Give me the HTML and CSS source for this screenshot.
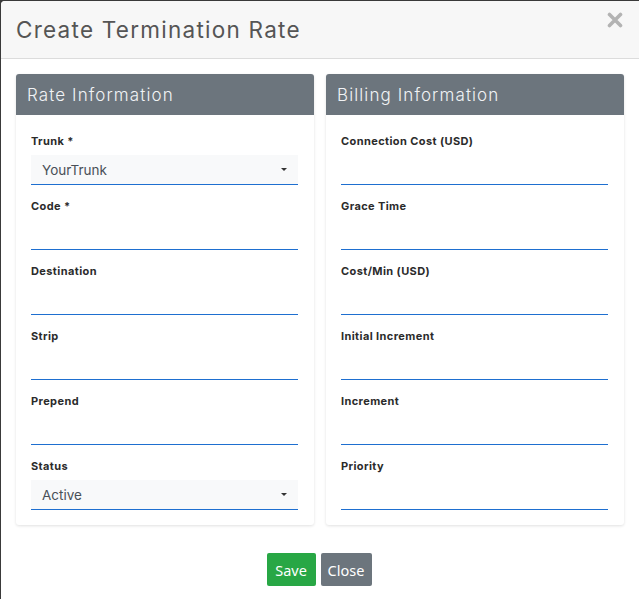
FILE: index.html
```html
<!DOCTYPE html>
<html>
<head>
<meta charset="utf-8">
<link rel="stylesheet" href="styles.css">
</head>
<body>
<div class="modal">
  <div class="modal-header">
    <h4 class="modal-title">Create Termination Rate</h4>
    <button class="close" type="button" aria-label="Close">
      <svg width="16" height="16" viewBox="0 0 16 16"><path d="M2.5 2.5 L13.5 13.5 M13.5 2.5 L2.5 13.5" stroke="#b3b3b3" stroke-width="3.6" stroke-linecap="round"/></svg>
    </button>
  </div>
  <div class="modal-body">
    <div class="panels">
      <div class="panel">
        <div class="panel-heading">Rate Information</div>
        <div class="panel-body">
          <div class="group"><label>Trunk *</label><div class="select"><span>YourTrunk</span><i class="caret"></i></div></div>
          <div class="group"><label>Code *</label><div class="input"></div></div>
          <div class="group"><label>Destination</label><div class="input"></div></div>
          <div class="group"><label>Strip</label><div class="input"></div></div>
          <div class="group"><label>Prepend</label><div class="input"></div></div>
          <div class="group"><label>Status</label><div class="select"><span>Active</span><i class="caret"></i></div></div>
        </div>
      </div>
      <div class="panel">
        <div class="panel-heading">Billing Information</div>
        <div class="panel-body">
          <div class="group"><label>Connection Cost (USD)</label><div class="input"></div></div>
          <div class="group"><label>Grace Time</label><div class="input"></div></div>
          <div class="group"><label>Cost/Min (USD)</label><div class="input"></div></div>
          <div class="group"><label>Initial Increment</label><div class="input"></div></div>
          <div class="group"><label>Increment</label><div class="input"></div></div>
          <div class="group"><label>Priority</label><div class="input"></div></div>
        </div>
      </div>
    </div>
    <div class="actions">
      <button class="btn btn-save" type="button">Save</button>
      <button class="btn btn-close" type="button">Close</button>
    </div>
  </div>
</div>
</body>
</html>
```

FILE: styles.css
```css
html, body {
  margin: 0;
  padding: 0;
}
body {
  background: #3a3a3a;
  font-family: Inter, "Noto Sans", sans-serif;
  height: 599px;
  overflow: hidden;
}
.modal {
  margin: 1px 0 0 1px;
  width: 638px;
  height: 620px;
  background: #fff;
  border-radius: 4px 0 0 0;
}
.modal-header {
  height: 57px;
  background: #f7f7f7;
  border-bottom: 1px solid #dcdcdc;
  border-radius: 4px 0 0 0;
  display: flex;
  align-items: center;
  justify-content: space-between;
  padding: 0 16px 0 15px;
}
.modal-title {
  margin: 0;
  font-size: 22.5px;
  font-weight: 400;
  color: #555;
  letter-spacing: 1.25px;
}
.close {
  background: none;
  border: 0;
  padding: 0;
  margin-top: -20px;
  width: 16px;
  height: 16px;
}
.close svg { display: block; }
.modal-body {
  padding: 15px;
}
.panels {
  display: flex;
  gap: 12px;
}
.panel {
  width: 298px;
  background: #fff;
  border-radius: 3px;
  box-shadow: 0 1px 3px rgba(0,0,0,0.12);
}
.panel-heading {
  height: 41px;
  background: #6c757d;
  color: #f1f3f5;
  border-radius: 3px 3px 0 0;
  font-size: 17px;
  font-weight: 300;
  padding-left: 11px;
  display: flex;
  align-items: center;
  letter-spacing: 1.1px;
}
.panel-body {
  padding: 15px 16px 15px 15px;
  display: flex;
  flex-direction: column;
  gap: 10px;
}
.group label {
  display: block;
  height: 22px;
  line-height: 22px;
  font-size: 11px;
  font-weight: 700;
  color: #2b2b2b;
  margin-bottom: 3px;
  letter-spacing: 0.4px;
}
.input, .select {
  height: 29px;
  border-bottom: 1px solid #1e6fd0;
}
.select {
  background: #f8f9fa;
  display: flex;
  align-items: center;
  justify-content: space-between;
  padding: 0 11px;
  font-size: 13.5px;
  color: #495057;
}
.caret {
  width: 0;
  height: 0;
  border-left: 3px solid transparent;
  border-right: 3px solid transparent;
  border-top: 3px solid #333;
}
.actions {
  display: flex;
  justify-content: center;
  gap: 5px;
  margin-top: 28px;
  padding-right: 2px;
}
.btn {
  height: 33px;
  border: 0;
  border-radius: 2px;
  color: #fff;
  font-family: "Noto Sans", sans-serif;
  font-size: 14.5px;
  padding: 0 6px;
}
.btn-save { background: #28a745; width: 49px; }
.btn-close { background: #6c757d; width: 51px; }
```
